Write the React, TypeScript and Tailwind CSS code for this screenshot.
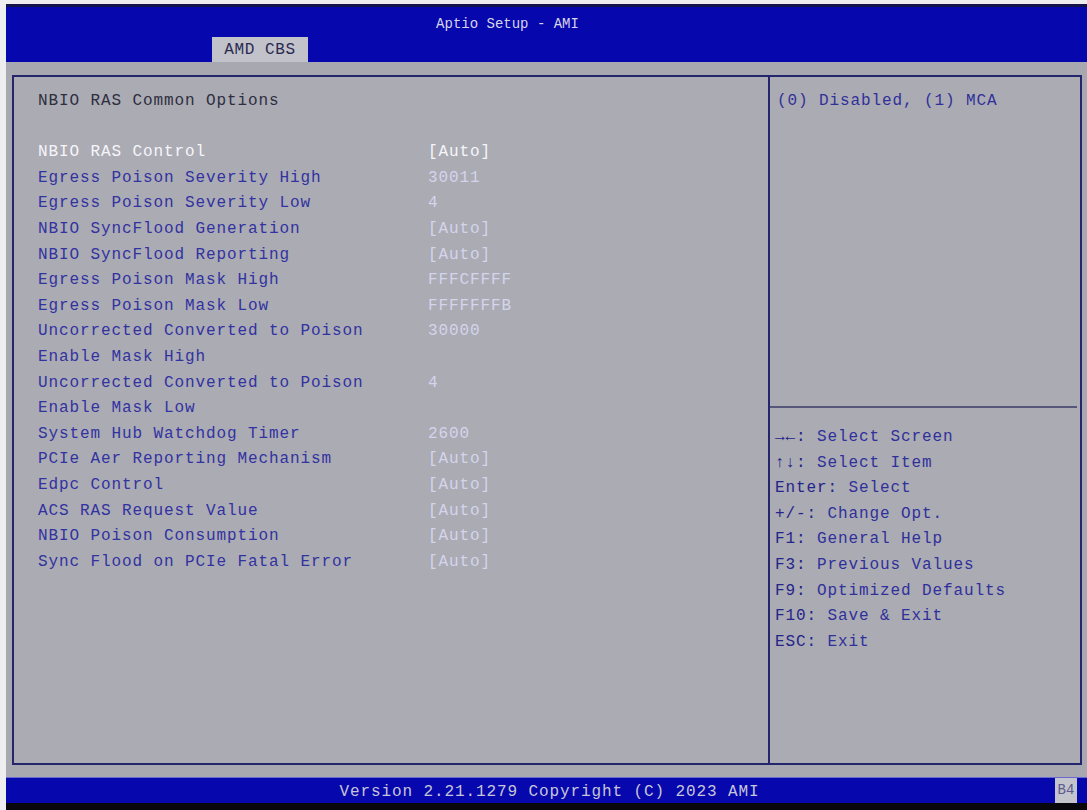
const rows: { label: string[]; value: string; selected?: boolean }[] = [
  { label: ['NBIO RAS Control'], value: '[Auto]', selected: true },
  { label: ['Egress Poison Severity High'], value: '30011' },
  { label: ['Egress Poison Severity Low'], value: '4' },
  { label: ['NBIO SyncFlood Generation'], value: '[Auto]' },
  { label: ['NBIO SyncFlood Reporting'], value: '[Auto]' },
  { label: ['Egress Poison Mask High'], value: 'FFFCFFFF' },
  { label: ['Egress Poison Mask Low'], value: 'FFFFFFFB' },
  { label: ['Uncorrected Converted to Poison', 'Enable Mask High'], value: '30000' },
  { label: ['Uncorrected Converted to Poison', 'Enable Mask Low'], value: '4' },
  { label: ['System Hub Watchdog Timer'], value: '2600' },
  { label: ['PCIe Aer Reporting Mechanism'], value: '[Auto]' },
  { label: ['Edpc Control'], value: '[Auto]' },
  { label: ['ACS RAS Request Value'], value: '[Auto]' },
  { label: ['NBIO Poison Consumption'], value: '[Auto]' },
  { label: ['Sync Flood on PCIe Fatal Error'], value: '[Auto]' },
];

const keys = [
  ['→←:', 'Select Screen'],
  ['↑↓:', 'Select Item'],
  ['Enter:', 'Select'],
  ['+/-:', 'Change Opt.'],
  ['F1:', 'General Help'],
  ['F3:', 'Previous Values'],
  ['F9:', 'Optimized Defaults'],
  ['F10:', 'Save & Exit'],
  ['ESC:', 'Exit'],
];

export default function App() {
  return (
    <div className="w-[1087px] h-[810px] bg-[#eeeef0] pl-[6px] pt-[4px] flex font-['Liberation_Mono',monospace] overflow-hidden">
      <div className="flex-1 flex flex-col bg-[#a8a8b1]">
        {/* Header */}
        <div className="h-[58px] flex flex-col bg-[#0707ae] border-t-[3px] border-[#14144a]">
          <div className="h-[30px] pt-[4px] flex items-center justify-center pr-[78px] text-[14px] text-[#d6d6e6]">
            Aptio Setup - AMI
          </div>
          <div className="flex-1 flex items-end pl-[206px]">
            <div className="h-[25px] w-[96px] bg-[#c2c2ca] flex items-center justify-center text-[16px] tracking-[0.6px] text-[#2a2a50]">
              AMD CBS
            </div>
          </div>
        </div>

        {/* Body */}
        <div className="flex-1 pl-[6px] pr-[5px] pt-[13px] pb-[12px] flex">
          <div className="flex-1 flex border-2 border-[#25256e] bg-[#ababb4] text-[16px] tracking-[0.9px] leading-[25.6px]">
            {/* Left panel */}
            <div className="w-[754px] pt-[12px] pl-[24px]">
              <div className="text-[#2e2e3e]">NBIO RAS Common Options</div>
              <div className="h-[25.6px]" />
              {rows.map((r, i) => (
                <div key={i} className="flex">
                  <div className={`w-[390px] ${r.selected ? 'text-[#f6f6fa]' : 'text-[#3232a0]'}`}>
                    {r.label.map((l, j) => (
                      <div key={j}>{l}</div>
                    ))}
                  </div>
                  <div className={r.selected ? 'text-[#f6f6fa]' : 'text-[#d4d4ec]'}>{r.value}</div>
                </div>
              ))}
            </div>

            {/* Right panel */}
            <div className="flex-1 flex flex-col border-l-2 border-[#25256e]">
              <div className="h-[329px] pt-[12px] pl-[7px] text-[#30309a]">(0) Disabled, (1) MCA</div>
              <div className="h-[2px] mr-[3px] bg-[#56567a]" />
              <div className="pt-[17px] pl-[5px]">
                {keys.map(([k, t]) => (
                  <div key={k} className="text-[#30309a]">
                    <span className="text-[#24248a]">{k}</span> {t}
                  </div>
                ))}
              </div>
            </div>
          </div>
        </div>

        {/* Footer */}
        <div className="h-[26px] flex bg-[#0707ae] border-t border-[#6a6ad0]">
          <div className="flex-1 flex items-center justify-center pl-[38px] pt-[2px] text-[16px] tracking-[0.9px] text-[#c6c6d6]">
            Version 2.21.1279 Copyright (C) 2023 AMI
          </div>
          <div className="w-[22px] bg-[#c4c4cc] flex items-center justify-center text-[14px] text-[#5a5a90]">
            B4
          </div>
          <div className="w-[10px]" />
        </div>
        <div className="h-[7px] bg-[#08080c]" />
      </div>
    </div>
  );
}
